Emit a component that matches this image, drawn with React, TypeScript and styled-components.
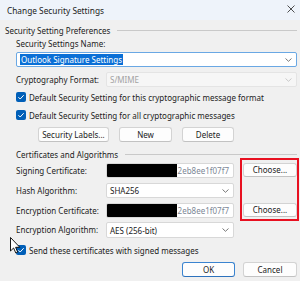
import React from 'react';
import styled, {createGlobalStyle} from 'styled-components';

const GlobalStyle = createGlobalStyle`
	html, body {
		margin: 0;
		padding: 0;
		background: #f0f0f0;
	}
`;

const Dialog = styled.div`
	position: relative;
	width: 300px;
	height: 281px;
	overflow: hidden;
	background: #f0f0f0;
	font-family: 'Noto Sans', 'Open Sans', sans-serif;
	font-size: 8px;
	color: #1b1b1b;
`;
const TitleBar = styled.div`
	display: flex;
	align-items: center;
	justify-content: space-between;
	box-sizing: border-box;
	height: 20px;
	padding: 0 5px 0 7px;
	background: #eef3fa;
	font-size: 8.3px;
`;
const Content = styled.div`
	display: flex;
	flex-direction: column;
	padding: 0 3px 0 16px;
`;
const SectionHead = styled.div<{indent?: number; top: number}>`
	display: flex;
	align-items: center;
	height: 12px;
	margin-top: ${(p) => p.top}px;
	margin-left: ${(p) => p.indent ?? 0}px;
	&::after {
		content: '';
		flex: 1;
		height: 1px;
		margin-left: 7px;
		background: #c9c9c9;
	}
`;
const Label = styled.div<{w?: number}>`
	width: ${(p) => (p.w ? `${p.w}px` : 'auto')};
	flex-shrink: 0;
	line-height: 12px;
	margin-top: 2px;
`;
const Row = styled.div<{top: number; h?: number}>`
	display: flex;
	align-items: center;
	gap: 9px;
	height: ${(p) => p.h ?? 15}px;
	margin-top: ${(p) => p.top}px;
	& > ${Label} {
		margin-top: 0;
		margin-right: -9px;
	}
`;
const Field = styled.div<{w?: number; disabled?: boolean; focused?: boolean}>`
	display: flex;
	align-items: center;
	box-sizing: border-box;
	width: ${(p) => (p.w ? `${p.w}px` : 'auto')};
	flex: ${(p) => (p.w ? '0 0 auto' : '1')};
	height: 100%;
	padding: 0 4px 0 2px;
	border: 1px solid ${(p) => (p.focused ? '#6aa8e4' : p.disabled ? '#e4e4e4' : '#d8d8d8')};
	border-radius: 2px;
	background: ${(p) => (p.disabled ? '#f6f6f6' : '#ffffff')};
	color: ${(p) => (p.disabled ? '#a2a2a2' : '#1b1b1b')};
	white-space: nowrap;
	overflow: hidden;
`;
const FieldText = styled.span`
	flex: 1;
	padding-left: 1px;
`;
const Selected = styled.span`
	background: #0a6fd6;
	color: #ffffff;
	padding: 0 1px;
`;
const Redacted = styled.span`
	width: 75px;
	height: 100%;
	margin-left: -2px;
	background: #000000;
`;
const Thumb = styled.span`
	color: #7c8796;
	padding-left: 1px;
`;
const Chevron = styled.svg`
	flex-shrink: 0;
	width: 7px;
	height: 4px;
`;
const CheckRow = styled.div<{top: number}>`
	display: flex;
	align-items: center;
	gap: 3px;
	height: 18px;
	margin-top: ${(p) => p.top}px;
`;
const Box = styled.span`
	display: flex;
	align-items: center;
	justify-content: center;
	width: 10px;
	height: 10px;
	border-radius: 2px;
	background: #005fb8;
`;
const ButtonRow = styled.div<{top: number; end?: boolean; pad?: number}>`
	display: flex;
	gap: ${(p) => (p.end ? 8 : 10)}px;
	justify-content: ${(p) => (p.end ? 'flex-end' : 'flex-start')};
	margin-top: ${(p) => p.top}px;
	padding-left: ${(p) => p.pad ?? 0}px;
`;
const Button = styled.button<{w: number; primary?: boolean}>`
	box-sizing: border-box;
	width: ${(p) => p.w}px;
	height: 15px;
	padding: 0;
	border: 1px solid ${(p) => (p.primary ? '#3a84d0' : '#d3d3d3')};
	border-bottom-color: ${(p) => (p.primary ? '#2d72bd' : '#c2c2c2')};
	border-radius: 3px;
	background: #fdfdfd;
	font-family: inherit;
	font-size: 8px;
	color: #1b1b1b;
	line-height: 12px;
`;
const ChooseButton = styled(Button)`
	height: 14px;
	align-self: flex-start;
`;
const Highlight = styled.div`
	position: absolute;
	left: 240px;
	top: 158px;
	width: 59px;
	height: 63px;
	box-sizing: border-box;
	border: 2px solid #e81020;
	pointer-events: none;
`;
const Cursor = styled.svg`
	position: absolute;
	left: 10px;
	top: 237px;
	width: 11px;
	height: 17px;
`;

const ChevronIcon = ({color = '#6a6a6a'}: {color?: string}) => (
	<Chevron viewBox="0 0 7 4">
		<path d="M0.5 0.5 L3.5 3.3 L6.5 0.5" fill="none" stroke={color} strokeWidth="0.9" />
	</Chevron>
);

const Check = ({label, top}: {label: string; top: number}) => (
	<CheckRow top={top}>
		<Box>
			<svg width="8" height="8" viewBox="0 0 8 8">
				<path d="M1.4 4.2 L3.2 6 L6.7 2.2" fill="none" stroke="#ffffff" strokeWidth="1" />
			</svg>
		</Box>
		{label}
	</CheckRow>
);

function App() {
	return (
		<Dialog>
			<GlobalStyle />
			<TitleBar>
				<span>Change Security Settings</span>
				<svg width="8" height="8" viewBox="0 0 8 8" style={{marginTop: -3}}>
					<path d="M0.5 0.5 L7.5 7.5 M7.5 0.5 L0.5 7.5" stroke="#3a3a3a" strokeWidth="0.9" />
				</svg>
			</TitleBar>
			<Content>
				<SectionHead top={4} indent={-11}>
					Security Setting Preferences
				</SectionHead>
				<Label>Security Settings Name:</Label>
				<Row top={2}>
					<Field focused>
						<FieldText>
							<Selected>Outlook Signature Settings</Selected>
						</FieldText>
						<ChevronIcon />
					</Field>
				</Row>
				<Row top={5}>
					<Label w={90}>Cryptography Format:</Label>
					<Field disabled>
						<FieldText>S/MIME</FieldText>
						<ChevronIcon color="#c4c4c4" />
					</Field>
				</Row>
				<Check top={1} label="Default Security Setting for this cryptographic message format" />
				<Check top={0} label="Default Security Setting for all cryptographic messages" />
				<ButtonRow top={3} pad={22}>
					<Button w={71}>Security Labels...</Button>
					<Button w={53}>New</Button>
					<Button w={52}>Delete</Button>
				</ButtonRow>
				<SectionHead top={6}>Certificates and Algorithms</SectionHead>
				<Row top={3}>
					<Label w={90}>Signing Certificate:</Label>
					<Field w={128}>
						<Redacted />
						<Thumb>2eb8ee1f07f7</Thumb>
					</Field>
					<ChooseButton w={54}>Choose...</ChooseButton>
				</Row>
				<Row top={5}>
					<Label w={90}>Hash Algorithm:</Label>
					<Field w={128}>
						<FieldText>SHA256</FieldText>
						<ChevronIcon />
					</Field>
				</Row>
				<Row top={5}>
					<Label w={90}>Encryption Certificate:</Label>
					<Field w={128}>
						<Redacted />
						<Thumb>2eb8ee1f07f7</Thumb>
					</Field>
					<ChooseButton w={54}>Choose...</ChooseButton>
				</Row>
				<Row top={4} h={16}>
					<Label w={90}>Encryption Algorithm:</Label>
					<Field w={128}>
						<FieldText>AES (256-bit)</FieldText>
						<ChevronIcon />
					</Field>
				</Row>
				<Check top={3} label="Send these certificates with signed messages" />
				<ButtonRow top={3} end>
					<Button w={53} primary>
						OK
					</Button>
					<Button w={54}>Cancel</Button>
				</ButtonRow>
			</Content>
			<Highlight />
			<Cursor viewBox="0 0 11 17">
				<path
					d="M0.5 0.5 L0.5 14 L3.6 11 L5.8 16 L7.7 15.2 L5.6 10.3 L9.8 10.3 Z"
					fill="#ffffff"
					stroke="#000000"
					strokeWidth="0.9"
					strokeLinejoin="round"
				/>
			</Cursor>
		</Dialog>
	);
}

export default App;
